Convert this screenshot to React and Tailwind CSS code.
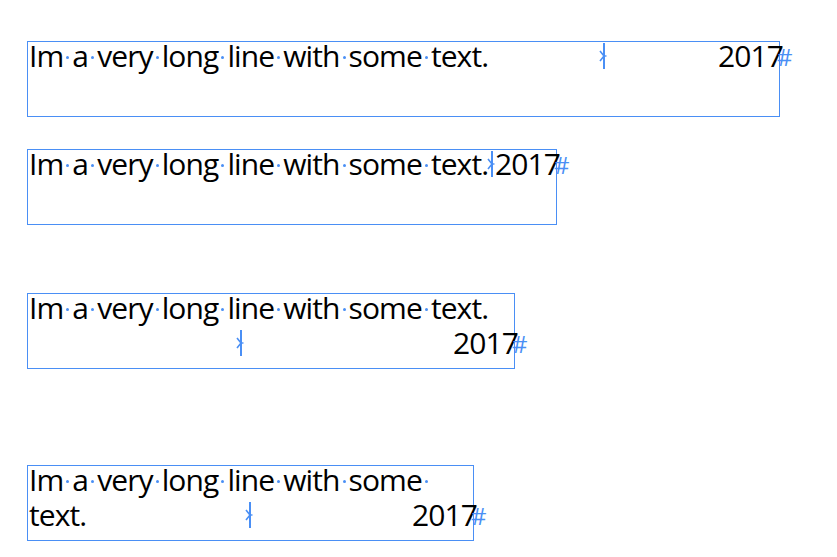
import React from 'react';

const blue = '#4a8ff5';

// hidden-character space marker
const Dot = () => (
    <span className="inline-block w-[3px] h-[3px] mx-[3px] rounded-full bg-[#4a8ff5] align-[8px]" />
);

const Words = ({ words, trailingDot }) => (
    <span className="whitespace-nowrap">
        {words.map((w, i) => (
            <React.Fragment key={i}>
                {i > 0 && <Dot />}
                {w}
            </React.Fragment>
        ))}
        {trailingDot && <Dot />}
    </span>
);

// right indent tab marker
const TabMark = () => (
    <svg width="9" height="26" viewBox="0 0 9 26" className="shrink-0">
        <line x1="5" y1="0" x2="5" y2="26" stroke={blue} strokeWidth="2" />
        <polyline points="1,8 5,13 1,18" fill="none" stroke={blue} strokeWidth="1.6" />
        <line x1="5" y1="13" x2="7.5" y2="13" stroke={blue} strokeWidth="1.4" />
    </svg>
);

const Tab = () => (
    <span className="flex-1 min-w-0 self-stretch flex items-center justify-center">
        <TabMark />
    </span>
);

const Year = () => (
    <>
        <span>2017</span>
        <span className="relative -top-[1px] w-0 -ml-[6px] text-[24px] tracking-[-1px] text-[#4a8ff5]">#</span>
    </>
);

const Line = ({ children }) => (
    <div className="flex items-baseline h-[35px] leading-[35px] -mt-[4px] mb-[4px]">
        {children}
    </div>
);

const Frame = ({ width, className = '', children }) => (
    <div className={`h-[76px] border border-[#4a8ff5] pl-[1px] pr-[2px] ${className}`} style={{ width }}>
        {children}
    </div>
);

const full = ['Im', 'a', 'very', 'long', 'line', 'with', 'some', 'text.'];

export default function App() {
    return (
        <div className="w-[837px] h-[557px] bg-white pt-[41px] pl-[27px] text-black text-[30px] tracking-[-0.9px]" style={{ fontFamily: '"Open Sans", sans-serif' }}>
            <Frame width={753}>
                <Line>
                    <Words words={full} />
                    <Tab />
                    <Year />
                </Line>
            </Frame>

            <Frame width={530} className="mt-[32px]">
                <Line>
                    <Words words={full} />
                    <Tab />
                    <Year />
                </Line>
            </Frame>

            <Frame width={488} className="mt-[68px]">
                <Line>
                    <Words words={full} />
                </Line>
                <Line>
                    <Tab />
                    <Year />
                </Line>
            </Frame>

            <Frame width={447} className="mt-[96px]">
                <Line>
                    <Words words={full.slice(0, 7)} trailingDot />
                </Line>
                <Line>
                    <Words words={['text.']} />
                    <Tab />
                    <Year />
                </Line>
            </Frame>
        </div>
    );
}
